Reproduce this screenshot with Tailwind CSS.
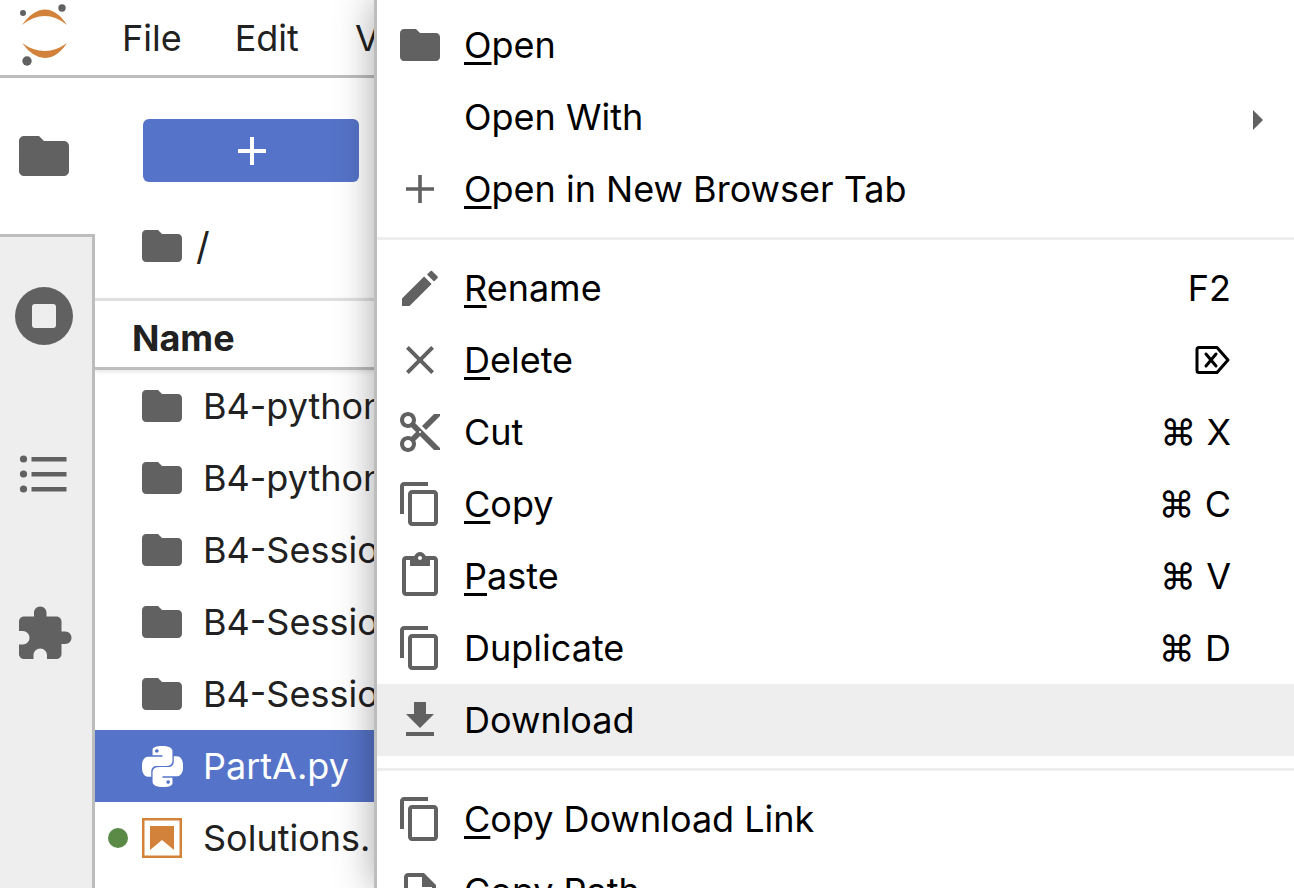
<!DOCTYPE html>
<html>
<head>
<meta charset="utf-8">
<script src="https://cdn.jsdelivr.net/npm/@tailwindcss/browser@4"></script>
</head>
<body class="m-0 bg-white">
<div class="relative w-[1294px] h-[888px] overflow-hidden bg-white font-['Inter','DejaVu_Sans',sans-serif] text-[36px] text-[#212121]">
  <!-- Top bar -->
  <header class="h-[78px] border-b-[3px] border-[#bdbdbd] flex items-center">
    <svg class="w-[90px] h-[75px] shrink-0" viewBox="0 0 90 75">
      <path d="M22 25Q33 9.500 45 9.500Q57 9.500 67 25Q56 16 45 16Q33 16 22 25Z" fill="#d3823b"/>
      <path d="M22 43Q33 58 45 58Q57 58 67 43Q56 51 45 51Q33 51 22 43Z" fill="#d3823b"/>
      <circle cx="62" cy="8" r="3.700" fill="#616161"/>
      <circle cx="23" cy="13" r="3" fill="#616161"/>
      <circle cx="27" cy="61" r="4.700" fill="#616161"/>
    </svg>
    <nav class="flex gap-[53px] ml-[32px]"><span>File</span><span>Edit</span><span class="ml-[3px]">View</span></nav>
  </header>

  <div class="flex h-[810px]">
    <!-- Sidebar -->
    <aside class="w-[95px] shrink-0 flex flex-col">
      <div class="h-[156px] flex items-center justify-center bg-white">
        <svg class="w-[60px] h-[60px] fill-[#616161] mr-[7px]" viewBox="0 0 24 24"><path d="M10 4H4c-1.100 0-1.990.9-1.990 2L2 18c0 1.100.9 2 2 2h16c1.100 0 2-.9 2-2V8c0-1.100-.9-2-2-2h-8l-2-2z"/></svg>
      </div>
      <div class="flex-1 bg-[#eeeeee] border-t-[3px] border-r-[3px] border-[#bdbdbd] flex flex-col items-center pr-[5px]">
        <div class="h-[158px] w-full flex items-center justify-center">
          <svg class="w-[60px] h-[60px]" viewBox="0 0 60 60"><circle cx="30" cy="30" r="29" fill="#616161"/><rect x="18" y="18" width="24" height="24" rx="3" fill="#eeeeee"/></svg>
        </div>
        <div class="h-[158px] w-full flex items-center justify-center">
          <svg class="w-[60px] h-[60px]" viewBox="0 0 60 60" fill="#616161"><circle cx="9.500" cy="15" r="3.600"/><circle cx="9.500" cy="30" r="3.600"/><circle cx="9.500" cy="45" r="3.600"/><rect x="17.500" y="13" width="35" height="4.500"/><rect x="17.500" y="28" width="35" height="4.500"/><rect x="17.500" y="43" width="35" height="4.500"/></svg>
        </div>
        <div class="h-[158px] w-full flex items-center justify-center pt-[4px]">
          <svg class="w-[60px] h-[60px] fill-[#616161]" viewBox="0 0 24 24"><path d="M20.500 11H19V7c0-1.100-.9-2-2-2h-4V3.500C13 2.120 11.880 1 10.500 1S8 2.120 8 3.500V5H4c-1.100 0-1.990.9-1.990 2v3.800H3.500c1.490 0 2.700 1.210 2.700 2.700s-1.210 2.700-2.700 2.700H2V20c0 1.100.9 2 2 2h3.800v-1.500c0-1.490 1.210-2.700 2.700-2.700 1.490 0 2.700 1.210 2.700 2.700V22H17c1.100 0 2-.9 2-2v-4h1.500c1.380 0 2.500-1.120 2.500-2.500S21.880 11 20.500 11z"/></svg>
        </div>
      </div>
    </aside>

    <!-- File browser -->
    <section class="w-[279px] shrink-0 flex flex-col overflow-hidden">
      <div class="pl-[48px] pt-[41px]">
        <div class="w-[216px] h-[63px] bg-[#5573c8] rounded-[6px] flex items-center justify-center pl-[2px]">
          <svg class="w-[48px] h-[48px] fill-white" viewBox="0 0 24 24"><path d="M19 13h-6v6h-2v-6H5v-2h6V5h2v6h6v2z"/></svg>
        </div>
      </div>
      <div class="h-[116px] pl-[43px] flex items-center pt-[12px] gap-[11px]">
        <svg class="w-[48px] h-[48px] fill-[#616161]" viewBox="0 0 24 24"><path d="M10 4H4c-1.100 0-1.990.9-1.990 2L2 18c0 1.100.9 2 2 2h16c1.100 0 2-.9 2-2V8c0-1.100-.9-2-2-2h-8l-2-2z"/></svg>
        <span class="-ml-[1px] text-[38px]">/</span>
      </div>
      <div class="h-[72px] border-t-[3px] border-b-[3px] border-t-[#e0e0e0] border-b-[#bdbdbd] pl-[37px] pt-[8px] flex items-center font-bold shadow-[0_2px_4px_rgba(0,0,0,0.1)]">Name</div>
      <ul class="flex flex-col">
        <li class="h-[72px] flex items-center whitespace-nowrap"><svg class="ml-[43px] w-[48px] h-[48px] fill-[#616161] shrink-0" viewBox="0 0 24 24"><path d="M10 4H4c-1.100 0-1.990.9-1.990 2L2 18c0 1.100.9 2 2 2h16c1.100 0 2-.9 2-2V8c0-1.100-.9-2-2-2h-8l-2-2z"/></svg><span class="ml-[17px]">B4-python</span></li>
        <li class="h-[72px] flex items-center whitespace-nowrap"><svg class="ml-[43px] w-[48px] h-[48px] fill-[#616161] shrink-0" viewBox="0 0 24 24"><path d="M10 4H4c-1.100 0-1.990.9-1.990 2L2 18c0 1.100.9 2 2 2h16c1.100 0 2-.9 2-2V8c0-1.100-.9-2-2-2h-8l-2-2z"/></svg><span class="ml-[17px]">B4-python</span></li>
        <li class="h-[72px] flex items-center whitespace-nowrap"><svg class="ml-[43px] w-[48px] h-[48px] fill-[#616161] shrink-0" viewBox="0 0 24 24"><path d="M10 4H4c-1.100 0-1.990.9-1.990 2L2 18c0 1.100.9 2 2 2h16c1.100 0 2-.9 2-2V8c0-1.100-.9-2-2-2h-8l-2-2z"/></svg><span class="ml-[17px]">B4-Session</span></li>
        <li class="h-[72px] flex items-center whitespace-nowrap"><svg class="ml-[43px] w-[48px] h-[48px] fill-[#616161] shrink-0" viewBox="0 0 24 24"><path d="M10 4H4c-1.100 0-1.990.9-1.990 2L2 18c0 1.100.9 2 2 2h16c1.100 0 2-.9 2-2V8c0-1.100-.9-2-2-2h-8l-2-2z"/></svg><span class="ml-[17px]">B4-Session</span></li>
        <li class="h-[72px] flex items-center whitespace-nowrap"><svg class="ml-[43px] w-[48px] h-[48px] fill-[#616161] shrink-0" viewBox="0 0 24 24"><path d="M10 4H4c-1.100 0-1.990.9-1.990 2L2 18c0 1.100.9 2 2 2h16c1.100 0 2-.9 2-2V8c0-1.100-.9-2-2-2h-8l-2-2z"/></svg><span class="ml-[17px]">B4-Session</span></li>
        <li class="h-[72px] flex items-center whitespace-nowrap bg-[#5573c8] text-white"><svg class="ml-[47px] w-[41px] h-[41px] fill-white shrink-0" viewBox="0 0 24 24"><path d="M14.250.180l.9.200.730.260.590.300.450.320.340.340.250.340.160.330.1.300.040.260.020.200-.010.130V8.500l-.050.630-.130.550-.210.460-.260.380-.3.310-.330.250-.350.190-.350.140-.33.100-.3.070-.260.040-.210.020H8.770l-.690.050-.590.140-.5.220-.41.270-.33.320-.27.350-.2.360-.15.370-.1.350-.07.320-.04.270-.02.210v3.060H3.170l-.21-.03-.28-.07-.32-.12-.35-.18-.36-.26-.36-.36-.35-.46-.32-.59-.28-.73-.21-.88-.14-1.050-.05-1.230.06-1.220.16-1.040.24-.87.32-.71.36-.57.4-.44.42-.33.42-.24.4-.16.36-.1.32-.05.24-.01h.16l.06.01h8.160v-.83H6.180l-.01-2.750-.02-.37.05-.34.11-.31.17-.28.25-.26.31-.23.38-.2.44-.18.51-.15.58-.12.64-.1.71-.06.77-.04.84-.02 1.270.05zm-6.300 1.980l-.23.33-.08.41.08.41.23.34.33.22.41.09.41-.09.33-.22.23-.34.08-.41-.08-.41-.23-.33-.33-.22-.41-.09-.41.09zm13.090 3.950l.28.06.32.12.35.18.36.27.36.35.35.47.32.59.28.73.21.88.14 1.040.05 1.230-.06 1.230-.16 1.040-.24.86-.32.71-.36.57-.4.45-.42.33-.42.24-.4.16-.36.09-.32.05-.24.02-.16-.01h-8.220v.82h5.840l.01 2.760.02.36-.05.34-.11.31-.17.29-.25.25-.31.24-.38.2-.44.17-.51.15-.58.13-.64.09-.71.07-.77.04-.84.01-1.270-.04-1.070-.14-.9-.2-.73-.25-.59-.3-.45-.33-.34-.34-.25-.34-.16-.33-.1-.3-.04-.25-.02-.2.01-.13v-5.340l.05-.64.13-.54.21-.46.26-.38.3-.32.33-.24.35-.2.35-.14.33-.1.3-.06.26-.04.21-.02.13-.01h5.840l.69-.05.59-.14.5-.21.41-.28.33-.32.27-.35.2-.36.15-.36.1-.35.07-.32.04-.28.02-.21V6.070h2.090l.14.01zm-6.470 14.250l-.23.33-.08.41.08.41.23.33.33.23.41.08.41-.08.33-.23.23-.33.08-.41-.08-.41-.23-.33-.33-.23-.41-.08-.41.08z"/></svg><span class="ml-[20px]">PartA.py</span></li>
        <li class="relative h-[72px] flex items-center whitespace-nowrap">
          <span class="absolute left-[13px] top-[26px] w-[20px] h-[20px] rounded-full bg-[#5b8a47]"></span>
          <svg class="ml-[47px] w-[40px] h-[40px] shrink-0 mr-[4px]" viewBox="0 0 40 40"><rect x="1.250" y="1.250" width="37.500" height="37.500" fill="none" stroke="#d3823b" stroke-width="2.500"/><path d="M8 8H32V32L20 22L8 32Z" fill="#d3823b"/></svg>
          <span class="ml-[17px]">Solutions.</span>
        </li>
      </ul>
    </section>
  </div>

  <!-- Context menu -->
  <div class="absolute left-[374px] top-0 w-[920px] h-[888px] bg-white border-l-[3px] border-[#bdbdbd] pt-[9px] text-black shadow-[0_0_36px_rgba(0,0,0,0.35)]">
    <div class="h-[72px] flex items-center"><svg class="ml-[19px] w-[48px] h-[48px] fill-[#616161] shrink-0" viewBox="0 0 24 24"><path d="M10 4H4c-1.100 0-1.990.9-1.990 2L2 18c0 1.100.9 2 2 2h16c1.100 0 2-.9 2-2V8c0-1.100-.9-2-2-2h-8l-2-2z"/></svg><span class="ml-[20px]"><span class="underline decoration-[3px] underline-offset-[4px] [text-decoration-skip-ink:none]">O</span>pen</span></div>
    <div class="h-[72px] flex items-center"><span class="ml-[87px]">Open With</span><svg class="ml-auto mr-[30px] mt-[6px] w-[11px] h-[20px] fill-[#616161]" viewBox="0 0 11 20"><path d="M0 0L10 10L0 20Z"/></svg></div>
    <div class="h-[72px] flex items-center"><svg class="ml-[19px] w-[48px] h-[48px] fill-[#616161] shrink-0" viewBox="0 0 24 24"><path d="M19 12.900h-6.100V19h-1.800v-6.100H5v-1.800h6.100V5h1.800v6.100H19v1.800z"/></svg><span class="ml-[20px]"><span class="underline decoration-[3px] underline-offset-[4px] [text-decoration-skip-ink:none]">O</span>pen in New Browser Tab</span></div>
    <div class="my-[12px] h-[3px] bg-[#eeeeee]"></div>
    <div class="h-[72px] flex items-center"><svg class="ml-[19px] w-[48px] h-[48px] fill-[#616161] shrink-0" viewBox="0 0 24 24"><path d="M3 17.250V21h3.750L17.810 9.940l-3.750-3.750L3 17.250zM15.500 5.300L17.300 3.500c.2-.2.5-.2.7 0l2.800 2.800c.2.2.2.5 0 .7L19 8.800z"/></svg><span class="ml-[20px]"><span class="underline decoration-[3px] underline-offset-[4px] [text-decoration-skip-ink:none]">R</span>ename</span><span class="ml-auto mr-[63px]">F2</span></div>
    <div class="h-[72px] flex items-center"><svg class="ml-[19px] w-[48px] h-[48px] fill-[#616161] shrink-0" viewBox="0 0 24 24"><path d="M19 6.410L17.590 5 12 10.590 6.410 5 5 6.410 10.590 12 5 17.590 6.410 19 12 13.410 17.590 19 19 17.590 13.410 12z"/></svg><span class="ml-[20px]"><span class="underline decoration-[3px] underline-offset-[4px] [text-decoration-skip-ink:none]">D</span>elete</span><svg class="ml-auto mr-[63px] w-[36px] h-[30px]" viewBox="0 0 36 30" fill="none" stroke="#000" stroke-width="3" stroke-linejoin="round" stroke-linecap="round"><path d="M4 2.500H22L33 15L22 27.500H4Q2 27.500 2 25.500V4.500Q2 2.500 4 2.500Z"/><path d="M11 9L21 21M21 9L11 21"/></svg></div>
    <div class="h-[72px] flex items-center"><svg class="ml-[19px] w-[48px] h-[48px] fill-[#616161] shrink-0" viewBox="0 0 24 24"><path d="M9.640 7.640c.23-.5.36-1.050.36-1.640 0-2.210-1.790-4-4-4S2 3.790 2 6s1.790 4 4 4c.59 0 1.140-.13 1.640-.36L10 12l-2.360 2.360C7.140 14.130 6.590 14 6 14c-2.210 0-4 1.790-4 4s1.790 4 4 4 4-1.790 4-4c0-.59-.13-1.140-.36-1.640L12 14l7 7h3v-1L9.640 7.640zM6 8c-1.100 0-2-.89-2-2s.9-2 2-2 2 .89 2 2-.9 2-2 2zm0 12c-1.100 0-2-.89-2-2s.9-2 2-2 2 .89 2 2-.9 2-2 2zm6-7.500c-.28 0-.5-.22-.5-.5s.22-.5.5-.5.5.22.5.5-.22.5-.5.5zM19 3l-6 6 2 2 7-7V3z"/></svg><span class="ml-[20px]">Cut</span><span class="ml-auto mr-[63px]">⌘ X</span></div>
    <div class="h-[72px] flex items-center"><svg class="ml-[19px] w-[48px] h-[48px] fill-[#616161] shrink-0" viewBox="0 0 24 24"><path d="M16 1H4c-1.100 0-2 .9-2 2v14h2V3h12V1zm3 4H8c-1.100 0-2 .9-2 2v14c0 1.100.9 2 2 2h11c1.100 0 2-.9 2-2V7c0-1.100-.9-2-2-2zm0 16H8V7h11v14z"/></svg><span class="ml-[20px]"><span class="underline decoration-[3px] underline-offset-[4px] [text-decoration-skip-ink:none]">C</span>opy</span><span class="ml-auto mr-[63px]">⌘ C</span></div>
    <div class="h-[72px] flex items-center"><svg class="ml-[19px] w-[48px] h-[48px] fill-[#616161] shrink-0" viewBox="0 0 24 24"><path d="M19 2h-4.180C14.400.84 13.300 0 12 0c-1.300 0-2.400.84-2.820 2H5c-1.100 0-2 .9-2 2v16c0 1.100.9 2 2 2h14c1.100 0 2-.9 2-2V4c0-1.100-.9-2-2-2zm-7 0c.55 0 1 .45 1 1s-.45 1-1 1-1-.45-1-1 .45-1 1-1zm7 18H5V4h2v3h10V4h2v16z"/></svg><span class="ml-[20px]"><span class="underline decoration-[3px] underline-offset-[4px] [text-decoration-skip-ink:none]">P</span>aste</span><span class="ml-auto mr-[63px]">⌘ V</span></div>
    <div class="h-[72px] flex items-center"><svg class="ml-[19px] w-[48px] h-[48px] fill-[#616161] shrink-0" viewBox="0 0 24 24"><path d="M16 1H4c-1.100 0-2 .9-2 2v14h2V3h12V1zm3 4H8c-1.100 0-2 .9-2 2v14c0 1.100.9 2 2 2h11c1.100 0 2-.9 2-2V7c0-1.100-.9-2-2-2zm0 16H8V7h11v14z"/></svg><span class="ml-[20px]">Duplicate</span><span class="ml-auto mr-[63px]">⌘ D</span></div>
    <div class="h-[72px] flex items-center bg-[#eeeeee]"><svg class="ml-[19px] w-[48px] h-[48px] fill-[#616161] shrink-0" viewBox="0 0 24 24"><path d="M19 9h-4V3H9v6H5l7 7 7-7zM5 18v2h14v-2H5z"/></svg><span class="ml-[20px]">Download</span></div>
    <div class="my-[12px] h-[3px] bg-[#eeeeee]"></div>
    <div class="h-[72px] flex items-center"><svg class="ml-[19px] w-[48px] h-[48px] fill-[#616161] shrink-0" viewBox="0 0 24 24"><path d="M16 1H4c-1.100 0-2 .9-2 2v14h2V3h12V1zm3 4H8c-1.100 0-2 .9-2 2v14c0 1.100.9 2 2 2h11c1.100 0 2-.9 2-2V7c0-1.100-.9-2-2-2zm0 16H8V7h11v14z"/></svg><span class="ml-[20px]"><span class="underline decoration-[3px] underline-offset-[4px] [text-decoration-skip-ink:none]">C</span>opy Download Link</span></div>
    <div class="h-[72px] flex items-center"><svg class="ml-[19px] w-[48px] h-[48px] fill-[#616161] shrink-0" viewBox="0 0 24 24"><path d="M14 3H6c-1.100 0-2 .9-2 2v15c0 1.100.9 2 2 2h12c1.100 0 2-.9 2-2V9l-6-6zM6 20V5h7v5h5v10H6z"/></svg><span class="ml-[20px]">Copy Path</span></div>
  </div>
</div>
</body>
</html>
